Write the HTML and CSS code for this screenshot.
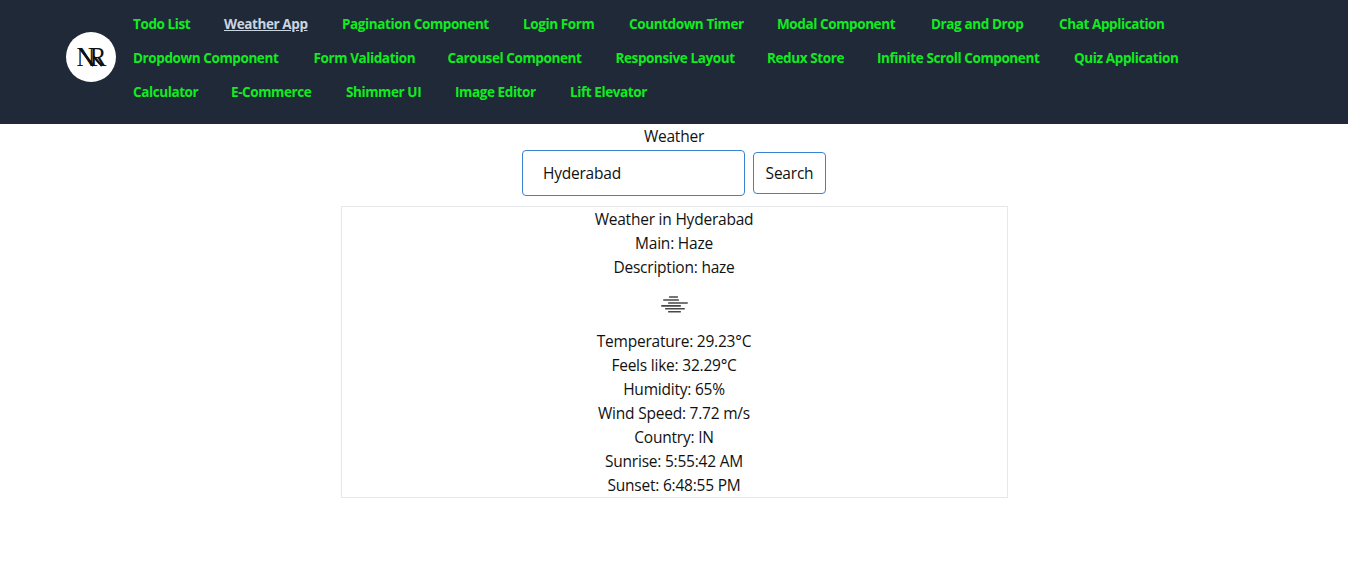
FILE: index.html
```html
<!DOCTYPE html>
<html lang="en">
<head>
<meta charset="utf-8">
<title>Weather App</title>
<link rel="stylesheet" href="styles.css">
</head>
<body>
<header class="header">
  <svg class="logo" viewBox="0 0 50 50" role="img" aria-label="NR">
    <circle cx="25" cy="25" r="25" fill="#fff"/>
    <text class="logo-letters" transform="translate(10.4 34.2) scale(.92 1)">NR</text>
    <path class="logo-stroke" d="M14 16.5l13.5 17.5M27.5 24.5l8.5 9.5"/>
  </svg>
  <nav class="nav">
    <div class="nav-row row-one">
      <a class="link">Todo List</a><a class="link active">Weather App</a><a class="link">Pagination Component</a><a class="link">Login Form</a><a class="link">Countdown Timer</a><a class="link">Modal Component</a><a class="link">Drag and Drop</a><a class="link">Chat Application</a>
    </div>
    <div class="nav-row row-two">
      <a class="link">Dropdown Component</a><a class="link">Form Validation</a><a class="link">Carousel Component</a><a class="link">Responsive Layout</a><a class="link">Redux Store</a><a class="link">Infinite Scroll Component</a><a class="link">Quiz Application</a>
    </div>
    <div class="nav-row row-three">
      <a class="link">Calculator</a><a class="link">E-Commerce</a><a class="link">Shimmer UI</a><a class="link">Image Editor</a><a class="link">Lift Elevator</a>
    </div>
  </nav>
</header>
<main class="main">
  <h1 class="title">Weather</h1>
  <form class="search">
    <input class="search-input" type="text" value="Hyderabad">
    <button class="search-button" type="button">Search</button>
  </form>
  <section class="card">
    <p>Weather in Hyderabad</p>
    <p>Main: Haze</p>
    <p>Description: haze</p>
    <svg class="haze" viewBox="0 0 50 50">
      <path d="M20 21.5h9M14 24.5h16M19 27.5h20M12 30.5h20M16 33.5h20M19 36.5h13" />
    </svg>
    <p>Temperature: 29.23°C</p>
    <p>Feels like: 32.29°C</p>
    <p>Humidity: 65%</p>
    <p>Wind Speed: 7.72 m/s</p>
    <p>Country: IN</p>
    <p>Sunrise: 5:55:42 AM</p>
    <p>Sunset: 6:48:55 PM</p>
  </section>
</main>
</body>
</html>
```
FILE: styles.css
```css
* { box-sizing: border-box; margin: 0; padding: 0; }
body {
  background: #fff;
  color: #111;
  font: 400 15.5px/24px "Open Sans", "Noto Sans", sans-serif;
  letter-spacing: -0.22px;
}
.header {
  display: flex;
  height: 124px;
  padding-left: 66px;
  background: #1f2937;
}
.logo { flex: none; width: 50px; height: 50px; margin: 32px 17px 0 0; }
.logo-letters { font: 400 27.5px "Liberation Serif", serif; fill: #111; letter-spacing: -5.5px; }
.logo-stroke { fill: none; stroke: #111; stroke-width: 2.4; }
.nav { padding-top: 7px; }
.nav-row { display: grid; column-gap: 34px; height: 34px; justify-items: start; }
.row-one { grid-template-columns: 57px 84px 147px 72px 114px 120px 94px 106px; }
.row-two { grid-template-columns: 146.5px 100px 134px 117.5px 76px 163px 106px; }
.row-three { grid-template-columns: 64px 81px 75px 81px 76px; }
.link {
  color: #10ec20;
  font-size: 13.5px;
  font-weight: 700;
  line-height: 34px;
  letter-spacing: -0.4px;
  white-space: nowrap;
}
.active { color: #cbd5e1; text-decoration: underline; }
.main { display: flex; flex-direction: column; align-items: center; }
.title { font-size: inherit; font-weight: inherit; line-height: 24px; height: 25px; }
.search { display: flex; align-items: center; gap: 8px; padding-top: 1px; }
.search-input, .search-button {
  font: inherit;
  letter-spacing: inherit;
  color: #111;
  background: #fff;
  border: 1px solid #3b82d0;
  border-radius: 4px;
}
.search-input { width: 223px; height: 46px; padding: 0 20px; }
.search-button { width: 73px; height: 42px; }
.card {
  display: flex;
  flex-direction: column;
  align-items: center;
  width: 667px;
  height: 292px;
  margin-top: 10px;
  border: 1px solid #e5e7eb;
}
.haze { width: 50px; height: 50px; margin-top: -3px; margin-bottom: 4px; }
.haze path { fill: none; stroke: #48484a; stroke-width: 1.6; }
```
